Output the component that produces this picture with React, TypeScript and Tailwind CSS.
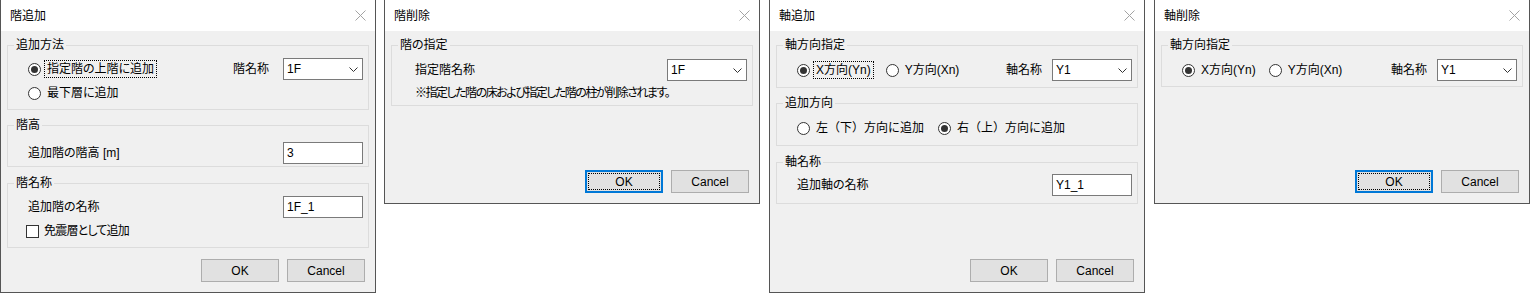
import type { ReactNode } from 'react';

const font = "font-['Liberation_Sans','Noto_Sans_CJK_JP',sans-serif] [font-feature-settings:'palt']";

function TitleBar({ title }: { title: string }) {
  return (
    <div className="flex h-[31px] shrink-0 items-center justify-between bg-white pl-[9px] pr-[9px]">
      <span className="text-[12px] leading-[16px] text-black">{title}</span>
      <svg width="11" height="11" viewBox="0 0 11 11" className="block">
        <path d="M0.5 0.5 L10.5 10.5 M10.5 0.5 L0.5 10.5" stroke="#a3a3a3" strokeWidth="1" fill="none" />
      </svg>
    </div>
  );
}

function Group({ legend, className, children }: { legend: string; className: string; children: ReactNode }) {
  return (
    <fieldset className={`border border-[#dcdcdc] ${className}`}>
      <legend className="ml-[6px] px-[2px] text-[12px] leading-[16px]">{legend}</legend>
      {children}
    </fieldset>
  );
}

function Radio({ label, checked, focused, wide }: { label: string; checked?: boolean; focused?: boolean; wide?: boolean }) {
  return (
    <div className="flex h-[18px] items-center">
      <span className="flex h-[13px] w-[13px] shrink-0 items-center justify-center rounded-full border border-[#333333] bg-white">
        {checked && <span className="h-[7px] w-[7px] rounded-full bg-[#333333]" />}
      </span>
      <span
        className={`ml-[3px] whitespace-nowrap border px-[2px] text-[12px] leading-[16px] ${
          focused ? 'border-dotted border-black' : 'border-transparent'
        } ${wide ? '[font-feature-settings:normal]' : ''}`}
      >
        {label}
      </span>
    </div>
  );
}

function Combo({ value }: { value: string }) {
  return (
    <div className="flex h-[22px] w-[80px] shrink-0 items-center justify-between border border-[#7a7a7a] bg-white pl-[3px] pr-[4px]">
      <span className="text-[12px] leading-[16px]">{value}</span>
      <svg width="9" height="5" viewBox="0 0 9 5" className="block">
        <polyline points="0.5,0.5 4.5,4.5 8.5,0.5" stroke="#333333" strokeWidth="1" fill="none" />
      </svg>
    </div>
  );
}

function TextBox({ value }: { value: string }) {
  return (
    <div className="flex h-[22px] w-[80px] shrink-0 items-center border border-[#7a7a7a] bg-white pl-[3px]">
      <span className="text-[12px] leading-[16px]">{value}</span>
    </div>
  );
}

function Buttons({ okFocused }: { okFocused?: boolean }) {
  return (
    <div className="mt-auto flex justify-end gap-[8px] pb-[10px] pr-[10px]">
      {okFocused ? (
        <div className="flex h-[23px] w-[78px] border-2 border-[#0078d7] bg-[#e1e1e1] p-px">
          <div className="flex flex-1 items-center justify-center border border-dotted border-black text-[12px] leading-[16px]">
            OK
          </div>
        </div>
      ) : (
        <div className="flex h-[23px] w-[78px] items-center justify-center border border-[#adadad] bg-[#e1e1e1] text-[12px] leading-[16px]">
          OK
        </div>
      )}
      <div className="flex h-[23px] w-[78px] items-center justify-center border border-[#adadad] bg-[#e1e1e1] text-[12px] leading-[16px]">
        Cancel
      </div>
    </div>
  );
}

function Dialog({ title, tall, className, children }: { title: string; tall?: boolean; className?: string; children: ReactNode }) {
  return (
    <div
      className={`flex w-[376px] shrink-0 flex-col border-x border-b border-[#555555] bg-[#f0f0f0] text-black ${
        tall ? 'h-[293px]' : 'h-[204px]'
      } ${className ?? ''}`}
    >
      <TitleBar title={title} />
      {children}
    </div>
  );
}

export default function App() {
  return (
    <div className={`flex min-h-[294px] w-[1530px] items-start bg-white ${font}`}>
      {/* 階追加 */}
      <Dialog title="階追加" tall>
        <div className="flex flex-col px-[6px]">
          <Group legend="追加方法" className="mt-[6px] pb-[5px]">
            <div className="mt-[5px] flex h-[22px] items-center pl-[20px] pr-[5px]">
              <Radio label="指定階の上階に追加" checked focused />
              <span className="ml-auto mr-[14px] text-[12px] leading-[16px]">階名称</span>
              <Combo value="1F" />
            </div>
            <div className="mt-[2px] flex h-[22px] items-center pl-[20px]">
              <Radio label="最下層に追加" />
            </div>
          </Group>
          <Group legend="階高" className="mt-[7px] pb-[2px]">
            <div className="mt-[9px] flex h-[22px] items-center pl-[20px] pr-[5px]">
              <span className="text-[12px] leading-[16px]">追加階の階高 [m]</span>
              <div className="ml-auto">
                <TextBox value="3" />
              </div>
            </div>
          </Group>
          <Group legend="階名称" className="mt-[8px] pb-[7px]">
            <div className="mt-[5px] flex h-[22px] items-center pl-[20px] pr-[5px]">
              <span className="text-[12px] leading-[16px]">追加階の名称</span>
              <div className="ml-auto">
                <TextBox value="1F_1" />
              </div>
            </div>
            <div className="mt-[4px] flex h-[18px] items-center pl-[18px]">
              <span className="h-[13px] w-[13px] border border-[#333333] bg-white" />
              <span className="ml-[5px] text-[12px] leading-[16px] tracking-[-0.8px]">免震層として追加</span>
            </div>
          </Group>
        </div>
        <Buttons />
      </Dialog>

      {/* 階削除 */}
      <Dialog title="階削除" className="ml-[8px]">
        <div className="flex flex-col px-[6px]">
          <Group legend="階の指定" className="mt-[6px] pb-[4px]">
            <div className="mt-[6px] flex h-[22px] items-center pl-[23px] pr-[5px]">
              <span className="text-[12px] leading-[16px]">指定階名称</span>
              <div className="ml-auto">
                <Combo value="1F" />
              </div>
            </div>
            <div className="mt-[4px] pl-[23px] text-[12px] leading-[16px] tracking-[-1.5px]">
              ※指定した階の床および指定した階の柱が削除されます。
            </div>
          </Group>
        </div>
        <Buttons okFocused />
      </Dialog>

      {/* 軸追加 */}
      <Dialog title="軸追加" tall className="ml-[9px]">
        <div className="flex flex-col px-[6px]">
          <Group legend="軸方向指定" className="mt-[6px] pb-[6px]">
            <div className="mt-[6px] flex h-[22px] items-center pl-[20px] pr-[5px]">
              <Radio label="X方向(Yn)" checked focused />
              <div className="ml-[12px]">
                <Radio label="Y方向(Xn)" />
              </div>
              <span className="ml-auto mr-[10px] text-[12px] leading-[16px]">軸名称</span>
              <Combo value="Y1" />
            </div>
          </Group>
          <Group legend="追加方向" className="mt-[7px] pb-[8px]">
            <div className="mt-[8px] flex h-[18px] items-center pl-[20px]">
              <Radio label="左（下）方向に追加" wide />
              <div className="ml-[11px]">
                <Radio label="右（上）方向に追加" checked wide />
              </div>
            </div>
          </Group>
          <Group legend="軸名称" className="mt-[8px] pb-[7px]">
            <div className="mt-[4px] flex h-[22px] items-center pl-[20px] pr-[5px]">
              <span className="text-[12px] leading-[16px]">追加軸の名称</span>
              <div className="ml-auto">
                <TextBox value="Y1_1" />
              </div>
            </div>
          </Group>
        </div>
        <Buttons />
      </Dialog>

      {/* 軸削除 */}
      <Dialog title="軸削除" className="ml-[9px]">
        <div className="flex flex-col px-[6px]">
          <Group legend="軸方向指定" className="mt-[6px] pb-[5px]">
            <div className="mt-[6px] flex h-[22px] items-center pl-[20px] pr-[5px]">
              <Radio label="X方向(Yn)" checked />
              <div className="ml-[10px]">
                <Radio label="Y方向(Xn)" />
              </div>
              <span className="ml-auto mr-[10px] text-[12px] leading-[16px]">軸名称</span>
              <Combo value="Y1" />
            </div>
          </Group>
        </div>
        <Buttons okFocused />
      </Dialog>
    </div>
  );
}
